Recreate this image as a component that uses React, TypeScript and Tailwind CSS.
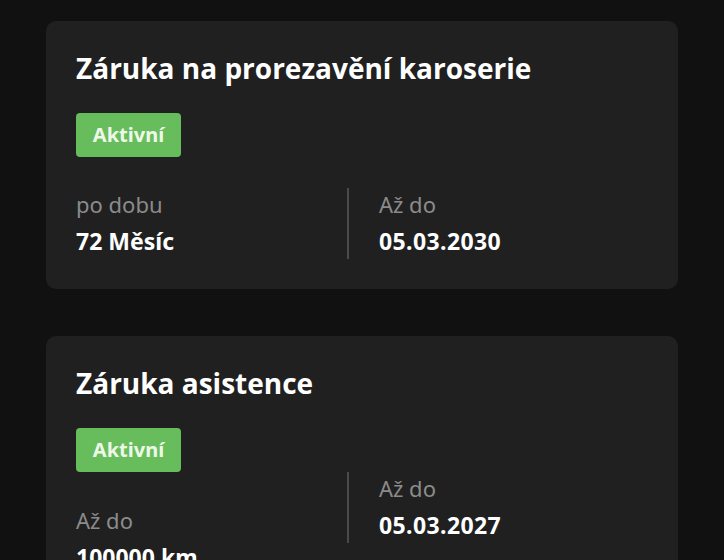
export default function App() {
  const font = { fontFamily: '"Noto Sans", "Open Sans", sans-serif' }

  return (
    <div className="min-h-[560px] w-full overflow-hidden bg-[#111111] px-[46px] pt-[21px]" style={font}>
      <div className="flex flex-col gap-[47px]">
        {/* Karta 1 */}
        <div className="rounded-[10px] bg-[#202020] px-[30px] pb-[30px] pt-[30px]">
          <h2 className="font-['Open_Sans',sans-serif] text-[28px] leading-[34px] font-bold text-white">
            Záruka na prorezavění karoserie
          </h2>
          <div className="mt-[28px] flex h-[44px] w-[105px] items-center justify-center rounded-[4px] bg-[#67bd5c] text-[20px] font-bold text-[#eef8e8]">
            Aktivní
          </div>
          <div className="mt-[31px] flex items-stretch">
            <div className="w-[271px] pt-[1px]">
              <div className="text-[22px] leading-[30px] text-[#8b8b8b]">po dobu</div>
              <div className="mt-[7px] text-[23px] leading-[30px] font-bold text-white">72 Měsíc</div>
            </div>
            <div className="h-[71px] w-[2px] bg-[#4a4a4a]" />
            <div className="pl-[30px] pt-[1px]">
              <div className="text-[22px] leading-[30px] text-[#8b8b8b]">Až do</div>
              <div className="mt-[7px] text-[23px] leading-[30px] font-bold tracking-[0.4px] text-white">05.03.2030</div>
            </div>
          </div>
        </div>

        {/* Karta 2 */}
        <div className="rounded-[10px] bg-[#202020] px-[30px] pb-[30px] pt-[30px]">
          <h2 className="font-['Open_Sans',sans-serif] text-[28px] leading-[34px] font-bold text-white">
            Záruka asistence
          </h2>
          <div className="mt-[28px] flex h-[44px] w-[105px] items-center justify-center rounded-[4px] bg-[#67bd5c] text-[20px] font-bold text-[#eef8e8]">
            Aktivní
          </div>
          <div className="flex items-start">
            <div className="w-[271px] pt-[33px]">
              <div className="text-[22px] leading-[30px] text-[#8b8b8b]">Až do</div>
              <div className="mt-[7px] text-[23px] leading-[30px] font-bold text-white">100000 km</div>
            </div>
            <div className="h-[71px] w-[2px] bg-[#4a4a4a]" />
            <div className="pl-[30px] pt-[1px]">
              <div className="text-[22px] leading-[30px] text-[#8b8b8b]">Až do</div>
              <div className="mt-[7px] text-[23px] leading-[30px] font-bold tracking-[0.4px] text-white">05.03.2027</div>
            </div>
          </div>
        </div>
      </div>
    </div>
  )
}
